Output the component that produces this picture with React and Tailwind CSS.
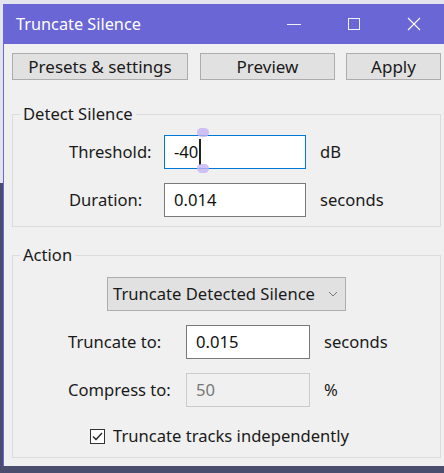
import React from 'react'

const font = { fontFamily: '"Noto Sans", "Liberation Sans", sans-serif' }

function Btn({ children, className }) {
  return (
    <button className={`h-[27px] bg-[#e1e1e1] border border-[#adadad] text-[17px] text-[#1a1a1a] leading-none ${className}`}>
      {children}
    </button>
  )
}

function Field({ value, focused, disabled, width }) {
  return (
    <div
      className={`relative h-[34px] ${width} flex items-center pl-[9px] text-[16.6px] ${
        focused ? 'border border-[#0078d7] bg-white text-[#111]' : disabled ? 'border border-[#cccccc] bg-[#f0f0f0] text-[#777]' : 'border border-[#7a7a7a] bg-white text-[#111]'
      }`}
    >
      {value}
      {focused && (
        <>
          <span className="w-[2px] h-[26px] bg-[#222] ml-[1px]" />
          <span className="absolute left-[32px] -top-[8px] w-[12px] h-[9px] rounded-full bg-[#c5b4f2]/80" />
          <span className="absolute left-[32px] -bottom-[5px] w-[12px] h-[9px] rounded-full bg-[#c5b4f2]/80" />
        </>
      )}
    </div>
  )
}

export default function App() {
  return (
    <div className="w-[444px] h-[473px] bg-[#4b4d6e] flex flex-col overflow-hidden text-[16.6px]" style={font}>
      <div className="h-[4px] bg-[#e4e4ee] shrink-0" />
      <div className="flex flex-1 min-h-0">
        <div className="w-[3px] flex flex-col">
          <div className="h-[179px] bg-[#e4e4ee]" />
          <div className="flex-1 bg-[#4b4d6e]" />
        </div>
        <div className="flex-1 flex flex-col h-[462px] border-l border-[#6a66d8] bg-[#f0f0f0]">
          {/* Title bar */}
          <div className="h-[40px] bg-[#6a66d6] flex items-center text-white shrink-0">
            <span className="ml-[12px] text-[16.3px]">Truncate Silence</span>
            <div className="ml-auto flex items-center h-full">
              <div className="w-[60px] flex justify-center">
                <span className="w-[14px] h-[1px] bg-white/90" />
              </div>
              <div className="w-[60px] flex justify-center">
                <span className="w-[12px] h-[12px] border border-white/90" />
              </div>
              <div className="w-[60px] flex justify-center">
                <svg width="14" height="14" viewBox="0 0 14 14">
                  <path d="M1 1L13 13M13 1L1 13" stroke="white" strokeWidth="1.1" />
                </svg>
              </div>
            </div>
          </div>

          {/* Buttons */}
          <div className="flex pt-[9px] pl-[8px] pr-[3px] shrink-0">
            <Btn className="w-[176px]">Presets &amp; settings</Btn>
            <Btn className="w-[135px] ml-[12px]">Preview</Btn>
            <Btn className="w-[95px] ml-[11px]">Apply</Btn>
          </div>

          {/* Detect Silence */}
          <fieldset className="mt-[25px] ml-[8px] mr-[3px] border border-[#dcdcdc] pt-[12px] pb-[9px]">
            <legend className="ml-[7px] px-[3px] text-[#1a1a1a] leading-[18px]">Detect Silence</legend>
            <div className="pl-[56px]">
              <div className="flex items-center">
                <span className="w-[95px] text-[#1a1a1a]">Threshold:</span>
                <Field value="-40" focused width="w-[142px]" />
                <span className="ml-[14px] text-[#1a1a1a]">dB</span>
              </div>
              <div className="flex items-center mt-[14px]">
                <span className="w-[95px] text-[#1a1a1a]">Duration:</span>
                <Field value="0.014" width="w-[142px]" />
                <span className="ml-[14px] text-[#1a1a1a]">seconds</span>
              </div>
            </div>
          </fieldset>

          {/* Action */}
          <fieldset className="mt-[19px] ml-[8px] mr-[3px] border border-[#dcdcdc] pt-[13px] pb-[8px]">
            <legend className="ml-[7px] px-[3px] text-[#1a1a1a] leading-[18px]">Action</legend>
            <div className="flex justify-center">
              <div className="w-[239px] h-[34px] bg-[#e1e1e1] border border-[#adadad] flex items-center pl-[5px] pr-[7px] text-[#1a1a1a]">
                Truncate Detected Silence
                <svg className="ml-auto" width="10" height="6" viewBox="0 0 10 6">
                  <path d="M1 1L5 5L9 1" stroke="#777" strokeWidth="1" fill="none" />
                </svg>
              </div>
            </div>
            <div className="flex items-center mt-[14px] pl-[55px]">
              <span className="w-[118px] text-[#1a1a1a]">Truncate to:</span>
              <Field value="0.015" width="w-[124px]" />
              <span className="ml-[14px] text-[#1a1a1a]">seconds</span>
            </div>
            <div className="flex items-center mt-[14px] pl-[55px]">
              <span className="w-[118px] text-[#1a1a1a]">Compress to:</span>
              <Field value="50" disabled width="w-[124px]" />
              <span className="ml-[14px] text-[#1a1a1a]">%</span>
            </div>
            <label className="flex items-center mt-[17px] pl-[77px]">
              <span className="w-[15px] h-[15px] border border-[#333] bg-white flex items-center justify-center">
                <svg width="11" height="9" viewBox="0 0 11 9">
                  <path d="M1 4.5L4 7.5L10 1" stroke="#222" strokeWidth="1.3" fill="none" />
                </svg>
              </span>
              <span className="ml-[8px] text-[#1a1a1a]">Truncate tracks independently</span>
            </label>
          </fieldset>
        </div>
      </div>
      <div className="h-[7px] bg-[#4b4d6e] shrink-0" />
    </div>
  )
}
